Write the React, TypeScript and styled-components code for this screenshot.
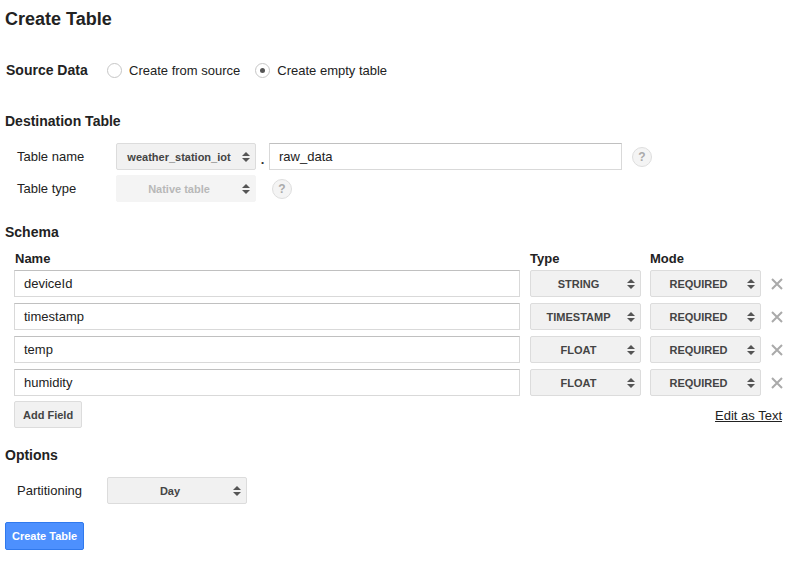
import React from 'react';
import styled, { createGlobalStyle } from 'styled-components';

const GlobalStyle = createGlobalStyle`
  body {
    margin: 0;
    background: #fff;
    font-family: "Liberation Sans", Arial, sans-serif;
    color: #222;
  }
`;

const Page = styled.div`
  padding: 8px 0 0 5px;
  width: 795px;
`;

const Title = styled.h1`
  margin: 0;
  font-size: 18px;
  line-height: 22px;
  font-weight: bold;
  color: #222;
`;

const SectionTitle = styled.h2<{ $top: number }>`
  margin: ${p => p.$top}px 0 0 0;
  font-size: 14px;
  line-height: 18px;
  font-weight: bold;
  color: #222;
`;

const SourceRow = styled.div`
  display: flex;
  align-items: center;
  margin-top: 31px;
  height: 18px;
`;

const SourceLabel = styled.span`
  font-size: 14px;
  font-weight: bold;
  width: 101px;
  padding-left: 1px;
`;

const RadioOption = styled.label`
  display: flex;
  align-items: center;
  font-size: 13px;
  color: #222;
  margin-right: 15px;
  cursor: pointer;
`;

const RadioCircle = styled.span<{ $checked?: boolean }>`
  width: 13px;
  height: 13px;
  border-radius: 50%;
  border: 1px solid #c6c6c6;
  background: #fff;
  margin-right: 7px;
  display: flex;
  align-items: center;
  justify-content: center;
  box-sizing: content-box;

  &::after {
    content: '';
    width: 5px;
    height: 5px;
    border-radius: 50%;
    background: ${p => (p.$checked ? '#555' : 'transparent')};
  }
`;

const FormRow = styled.div<{ $top: number }>`
  display: flex;
  align-items: center;
  margin-top: ${p => p.$top}px;
  height: 27px;
`;

const FieldLabel = styled.span<{ $width: number }>`
  font-size: 13px;
  color: #222;
  padding-left: 12px;
  width: ${p => p.$width}px;
`;

const SelectBox = styled.div<{ $width: number; $disabled?: boolean }>`
  position: relative;
  width: ${p => p.$width}px;
  height: 27px;
  box-sizing: border-box;
  background: ${p => (p.$disabled ? '#f4f4f4' : '#f1f1f1')};
  border: 1px solid ${p => (p.$disabled ? '#f4f4f4' : '#dcdcdc')};
  border-radius: 2px;
  display: flex;
  align-items: center;
  justify-content: center;
  padding-right: 14px;
  font-size: 11px;
  font-weight: bold;
  color: ${p => (p.$disabled ? '#b8b8b8' : '#444')};
`;

const Arrows = styled.span`
  position: absolute;
  right: 5px;
  top: 50%;
  transform: translateY(-50%);
  display: flex;
  flex-direction: column;
  gap: 2px;

  &::before, &::after {
    content: '';
    width: 0;
    height: 0;
    border-left: 4px solid transparent;
    border-right: 4px solid transparent;
  }
  &::before {
    border-bottom: 4px solid #555;
  }
  &::after {
    border-top: 4px solid #555;
  }
`;

const Select = ({ value, width, disabled }: { value: string; width: number; disabled?: boolean }) => (
  <SelectBox $width={width} $disabled={disabled}>
    {value}
    <Arrows />
  </SelectBox>
);

const Dot = styled.span`
  width: 13px;
  text-align: center;
  font-size: 13px;
  font-weight: bold;
  color: #333;
  align-self: flex-end;
  line-height: 20px;
`;

const TextInput = styled.div<{ $width?: number }>`
  width: ${p => (p.$width ? `${p.$width}px` : 'auto')};
  height: 27px;
  box-sizing: border-box;
  border: 1px solid #d9d9d9;
  border-top-color: #c0c0c0;
  background: #fff;
  display: flex;
  align-items: center;
  padding-left: 9px;
  font-size: 13px;
  color: #222;
`;

const Help = styled.span<{ $left: number }>`
  margin-left: ${p => p.$left}px;
  width: 18px;
  height: 18px;
  border-radius: 50%;
  border: 1px solid #dedede;
  background: #f4f4f4;
  color: #aaa;
  font-size: 12px;
  font-weight: bold;
  display: flex;
  align-items: center;
  justify-content: center;
`;

const SchemaGrid = styled.div`
  display: grid;
  grid-template-columns: 506px 111px 111px 16px;
  column-gap: 10px;
  padding-left: 9px;
`;

const SchemaHeader = styled(SchemaGrid)`
  margin-top: 10px;
  font-size: 13px;
  font-weight: bold;
  color: #222;
  line-height: 16px;

  & > span:first-child {
    padding-left: 1px;
  }
  & > span:nth-child(3) {
    margin-left: -1px;
  }
`;

const SchemaRow = styled(SchemaGrid)<{ $top: number }>`
  align-items: center;
  margin-top: ${p => p.$top}px;
  height: 27px;

  & > :nth-child(3) {
    margin-left: -1px;
  }
  & > svg {
    margin-left: -3px;
  }
`;

const RemoveIcon = () => (
  <svg width="16" height="16" viewBox="0 0 16 16">
    <path d="M3 3 L13 13 M13 3 L3 13" stroke="#aaa" strokeWidth="2" />
  </svg>
);

const SchemaFooter = styled.div`
  display: flex;
  align-items: center;
  justify-content: space-between;
  margin-top: 5px;
  padding-left: 9px;
  width: 768px;
`;

const GreyButton = styled.button`
  height: 27px;
  padding: 0 8px;
  background: #f1f1f1;
  border: 1px solid #dcdcdc;
  border-radius: 2px;
  font-family: inherit;
  font-size: 11px;
  font-weight: bold;
  color: #444;
`;

const TextLink = styled.a`
  font-size: 13px;
  color: #222;
  text-decoration: underline;
  margin-top: 1px;
`;

const PrimaryButton = styled.button`
  margin-top: 18px;
  height: 28px;
  padding: 0 6px;
  background: #4d90fe;
  border: 1px solid #3079ed;
  border-radius: 2px;
  font-family: inherit;
  font-size: 11px;
  font-weight: bold;
  color: #fff;
`;

const fields = [
  { name: 'deviceId', type: 'STRING' },
  { name: 'timestamp', type: 'TIMESTAMP' },
  { name: 'temp', type: 'FLOAT' },
  { name: 'humidity', type: 'FLOAT' },
];

export default function App() {
  return (
    <>
      <GlobalStyle />
      <Page>
        <Title>Create Table</Title>

        <SourceRow>
          <SourceLabel>Source Data</SourceLabel>
          <RadioOption>
            <RadioCircle />
            Create from source
          </RadioOption>
          <RadioOption>
            <RadioCircle $checked />
            Create empty table
          </RadioOption>
        </SourceRow>

        <SectionTitle $top={33}>Destination Table</SectionTitle>
        <FormRow $top={13}>
          <FieldLabel $width={99}>Table name</FieldLabel>
          <Select value="weather_station_iot" width={140} />
          <Dot>.</Dot>
          <TextInput $width={353}>raw_data</TextInput>
          <Help $left={10}>?</Help>
        </FormRow>
        <FormRow $top={5}>
          <FieldLabel $width={99}>Table type</FieldLabel>
          <Select value="Native table" width={140} disabled />
          <Help $left={16}>?</Help>
        </FormRow>

        <SectionTitle $top={21}>Schema</SectionTitle>
        <SchemaHeader>
          <span>Name</span>
          <span>Type</span>
          <span>Mode</span>
        </SchemaHeader>
        {fields.map((f, i) => (
          <SchemaRow key={f.name} $top={i === 0 ? 3 : 6}>
            <TextInput>{f.name}</TextInput>
            <Select value={f.type} width={111} />
            <Select value="REQUIRED" width={111} />
            <RemoveIcon />
          </SchemaRow>
        ))}
        <SchemaFooter>
          <GreyButton>Add Field</GreyButton>
          <TextLink href="#">Edit as Text</TextLink>
        </SchemaFooter>

        <SectionTitle $top={18}>Options</SectionTitle>
        <FormRow $top={13}>
          <FieldLabel $width={90}>Partitioning</FieldLabel>
          <Select value="Day" width={140} />
        </FormRow>

        <PrimaryButton>Create Table</PrimaryButton>
      </Page>
    </>
  );
}
